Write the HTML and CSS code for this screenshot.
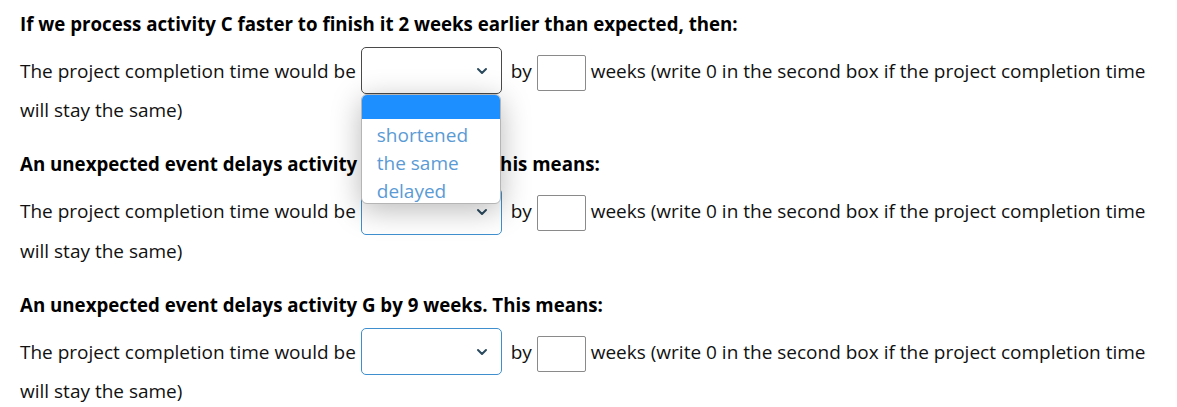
FILE: index.html
```html
<!DOCTYPE html>
<html lang="en">
<head>
<meta charset="utf-8">
<title>Project questions</title>
<link rel="stylesheet" href="styles.css">
</head>
<body>
<div class="page">
  <section class="item">
    <p class="q">If we process activity C faster to finish it 2 weeks earlier than expected, then:</p>
    <p class="a">The project completion time would be <span class="sel open"><span class="sel-box"><svg class="chev" width="12" height="8" viewBox="0 0 12 8"><path d="M2 2l4 4 4-4" fill="none" stroke="#2b4a5e" stroke-width="2" stroke-linecap="round" stroke-linejoin="round"/></svg></span><span class="menu"><span class="opt hl"></span><span class="opt">shortened</span><span class="opt">the same</span><span class="opt">delayed</span></span></span> by <input class="num" type="text"> weeks (write 0 in the second box if the project completion time<br>will stay the same)</p>
  </section>
  <section class="item">
    <p class="q">An unexpected event delays activity E by 3 weeks. This means:</p>
    <p class="a">The project completion time would be <span class="sel"><span class="sel-box"><svg class="chev" width="12" height="8" viewBox="0 0 12 8"><path d="M2 2l4 4 4-4" fill="none" stroke="#2b4a5e" stroke-width="2" stroke-linecap="round" stroke-linejoin="round"/></svg></span></span> by <input class="num" type="text"> weeks (write 0 in the second box if the project completion time<br>will stay the same)</p>
  </section>
  <section class="item">
    <p class="q">An unexpected event delays activity G by 9 weeks. This means:</p>
    <p class="a">The project completion time would be <span class="sel"><span class="sel-box"><svg class="chev" width="12" height="8" viewBox="0 0 12 8"><path d="M2 2l4 4 4-4" fill="none" stroke="#2b4a5e" stroke-width="2" stroke-linecap="round" stroke-linejoin="round"/></svg></span></span> by <input class="num" type="text"> weeks (write 0 in the second box if the project completion time<br>will stay the same)</p>
  </section>
</div>
</body>
</html>
```

FILE: styles.css
```css
html, body {
  margin: 0;
  padding: 0;
  background: #fff;
}
body {
  font-family: "Open Sans", "Noto Sans", sans-serif;
  color: #111;
  font-size: 19px;
}
.page {
  padding: 11px 20px 0 20px;
}
.item {
  margin-bottom: 22px;
}
.item:last-child {
  margin-bottom: 0;
}
.q {
  margin: 0 0 15px 0;
  font-weight: 700;
  font-size: 18.7px;
  line-height: 26px;
  color: #000;
}
.a {
  margin: 0;
  line-height: 38px;
}
.sel {
  position: relative;
  display: inline-block;
  vertical-align: middle;
  width: 141px;
  height: 47px;
  margin: -7px 4px -3px 0;
  line-height: normal;
}
.sel-box {
  display: block;
  box-sizing: border-box;
  width: 141px;
  height: 47px;
  border: 1px solid #3f8fcf;
  border-radius: 5px;
  background: #fff;
  position: relative;
}
.open .sel-box {
  border-color: #4a4a4a;
}
.chev {
  position: absolute;
  right: 13px;
  top: 19px;
}
.menu {
  position: absolute;
  left: 0;
  top: 47px;
  width: 140px;
  height: 110px;
  box-sizing: border-box;
  background: #fff;
  border: 1px solid #b5b5b5;
  border-radius: 6px;
  box-shadow: 0 6px 30px rgba(0, 0, 0, 0.28);
  z-index: 10;
  overflow: hidden;
}
.opt {
  display: block;
  height: 28px;
  line-height: 28px;
  padding-left: 15px;
  color: #5b9bd5;
}
.opt.hl {
  background: #1e8fff;
  height: 24px;
  margin-bottom: 2px;
}
.num {
  box-sizing: border-box;
  width: 49px;
  height: 36px;
  vertical-align: middle;
  border: 1px solid #8a8a8a;
  border-radius: 2px;
  margin: 0;
  padding: 0;
  font: inherit;
}
```
